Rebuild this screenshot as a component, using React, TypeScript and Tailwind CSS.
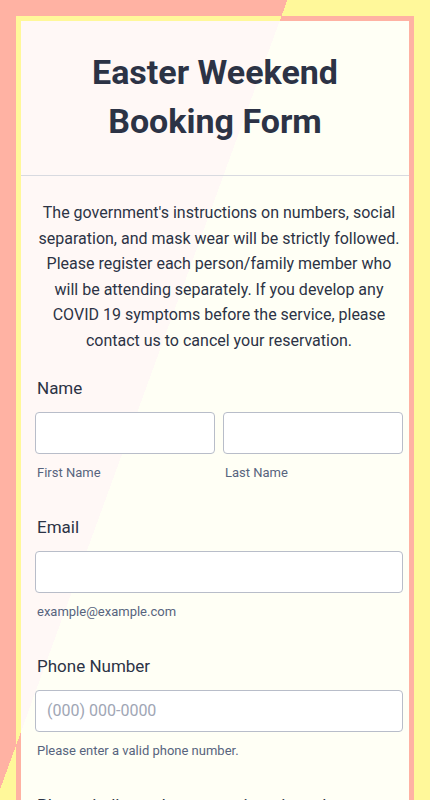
import { ReactNode } from 'react';

interface FieldProps {
  label: string;
  children: ReactNode;
}

// one labelled block of the form
const Field = ({ label, children }: FieldProps) => (
  <div className="pt-6 pb-3">
    <label className="block pl-[2px] text-[17px] leading-[20px] text-[#2c3345]">{label}</label>
    {children}
  </div>
);

const inputClass =
  'mt-[14px] block h-[42px] w-full rounded-[4px] border border-[#b8bdc9] bg-white px-[11px] text-[16px] text-[#2c3345] outline-none placeholder:text-[#a0a6b5]';

const subClass = 'mt-[11px] block pl-[2px] text-[13px] leading-[16px] text-[#57647e]';

const App = () => {
  return (
    <div className="min-h-screen bg-[linear-gradient(110deg,#ffb2a3_270px,#fff89a_270px)] bg-fixed p-4 font-[Roboto,sans-serif]">
      {/* frame with the colours swapped */}
      <div className="bg-[linear-gradient(110deg,#fff89a_270px,#ffb2a3_270px)] bg-fixed p-[5px]">
        <div className="bg-[linear-gradient(110deg,#fff8f6_270px,#fffff5_270px)] bg-fixed">
          {/* header */}
          <div className="border-b border-[#d8dae0] px-4 pt-[27px] pb-[29px] text-center">
            <h1 className="text-[34px] leading-[49px] font-bold text-[#2c3345]">
              Easter Weekend
              <br />
              Booking Form
            </h1>
          </div>

          <div className="pl-[14px] pr-[6px]">
            {/* description */}
            <p className="pt-6 text-center text-[16px] leading-[25.6px] text-[#2c3345]">
              The government's instructions on numbers, social separation, and mask wear will be
              strictly followed. Please register each person/family member who will be attending
              separately. If you develop any COVID 19 symptoms before the service, please contact
              us to cancel your reservation.
            </p>

            <Field label="Name">
              <div className="flex gap-2">
                <div className="flex-1">
                  <input className={inputClass} />
                  <span className={subClass}>First Name</span>
                </div>
                <div className="flex-1">
                  <input className={inputClass} />
                  <span className={subClass}>Last Name</span>
                </div>
              </div>
            </Field>

            <Field label="Email">
              <input type="email" className={inputClass} />
              <span className={subClass}>example@example.com</span>
            </Field>

            <Field label="Phone Number">
              <input type="tel" className={inputClass} placeholder="(000) 000-0000" />
              <span className={subClass}>Please enter a valid phone number.</span>
            </Field>

            <Field label="Please indicate the appropriate time slot">
              <select className={inputClass}>
                <option>Please Select</option>
              </select>
            </Field>
            <div className="h-10" />
          </div>
        </div>
      </div>
    </div>
  );
};

export default App;
